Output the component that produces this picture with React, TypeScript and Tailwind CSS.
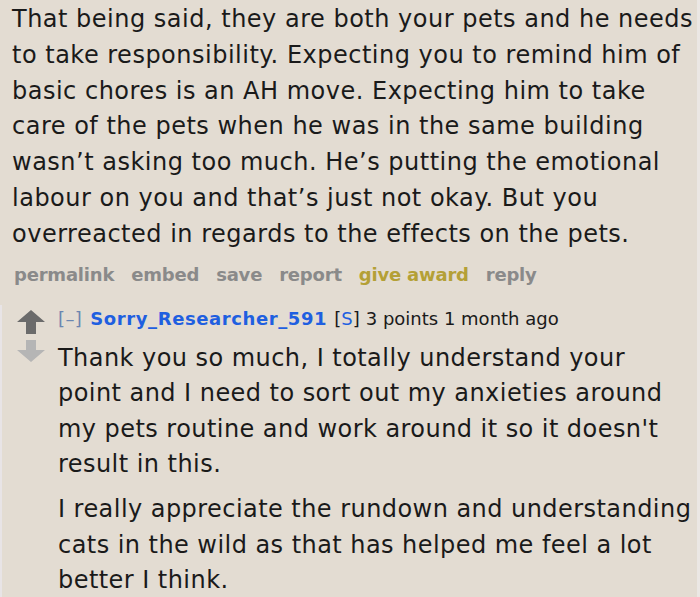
const first = [
  'That being said, they are both your pets and he needs',
  'to take responsibility. Expecting you to remind him of',
  'basic chores is an AH move. Expecting him to take',
  'care of the pets when he was in the same building',
  'wasn’t asking too much. He’s putting the emotional',
  'labour on you and that’s just not okay. But you',
  'overreacted in regards to the effects on the pets.',
];

const replyOne = [
  'Thank you so much, I totally understand your',
  'point and I need to sort out my anxieties around',
  "my pets routine and work around it so it doesn't",
  'result in this.',
];

const replyTwo = [
  'I really appreciate the rundown and understanding',
  'cats in the wild as that has helped me feel a lot',
  'better I think.',
];

export default function App() {
  const actions = ['permalink', 'embed', 'save', 'report'];

  return (
    <div
      className="h-[597px] w-[700px] overflow-hidden border-r-[3px] border-[#ebe7e4] bg-[#e3dcd2] text-[#1a1a1a]"
      style={{ fontFamily: '"DejaVu Sans", Verdana, sans-serif' }}
    >
      <div className="pl-3 pr-2 pt-[2px]">
        <p className="whitespace-nowrap text-[24px] leading-[35.8px] tracking-[0.5px]">
          {first.map((l) => (
            <span key={l} className="block">
              {l}
            </span>
          ))}
        </p>
        <div className="mt-[10px] flex gap-[17px] pl-[2px] text-[18px] font-bold leading-[24px] tracking-[-0.2px] text-[#8a8a8a]">
          {actions.map((a) => (
            <span key={a}>{a}</span>
          ))}
          <span className="text-[#b4a036]">give award</span>
          <span>reply</span>
        </div>
      </div>

      <div className="mt-[18px] flex border-l-[2px] border-[#e8e4e6]">
        <div className="flex w-[56px] shrink-0 flex-col items-center pl-[2px] pt-[5px]">
          <svg width="28" height="24" viewBox="0 0 28 24">
            <path d="M14 0 L28 12 L19 12 L19 24 L9 24 L9 12 L0 12 Z" fill="#6b6b6b" />
          </svg>
          <svg width="28" height="22" viewBox="0 0 28 22" className="mt-[6px]">
            <path d="M9 0 L19 0 L19 10 L28 10 L14 22 L0 10 L9 10 Z" fill="#b5b5b5" />
          </svg>
        </div>
        <div className="flex-1 pr-2">
          <div className="flex items-baseline gap-[6px] pt-[2px] text-[18px] leading-[24px]">
            <span className="tracking-[0.4px] text-[#6b86b0]">[–]</span>
            <span className="ml-[2px] font-bold tracking-[0.6px] text-[#1f5fe0]">
              Sorry_Researcher_591
            </span>
            <span className="ml-[1px]">
              [<span className="text-[#1f5fe0]">S</span>]
            </span>
            <span>3 points 1 month ago</span>
          </div>
          <div className="mt-[10px] whitespace-nowrap text-[24px] leading-[35.6px] tracking-[0.45px]">
            <p>
              {replyOne.map((l) => (
                <span key={l} className="block">
                  {l}
                </span>
              ))}
            </p>
            <p className="mt-[9px]">
              {replyTwo.map((l) => (
                <span key={l} className="block">
                  {l}
                </span>
              ))}
            </p>
          </div>
        </div>
      </div>
    </div>
  );
}
